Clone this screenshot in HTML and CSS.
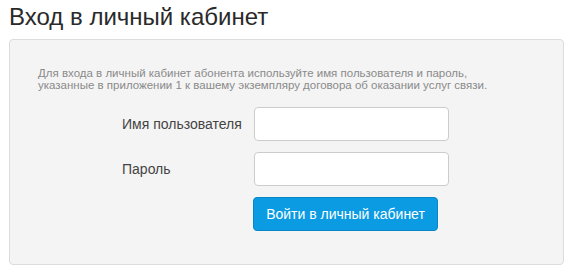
FILE: index.html
```html
<!DOCTYPE html>
<html lang="ru">
<head>
<meta charset="utf-8">
<link rel="stylesheet" href="styles.css">
</head>
<body>
<h1 class="title">Вход в личный кабинет</h1>
<div class="panel">
  <p class="hint">Для входа в личный кабинет абонента используйте имя пользователя и пароль,<br>указанные в приложении 1 к вашему экземпляру договора об оказании услуг связи.</p>
  <form class="form">
    <label class="label" for="u">Имя пользователя</label>
    <input class="input" id="u" type="text">
    <label class="label" for="p">Пароль</label>
    <input class="input" id="p" type="password">
    <span></span>
    <button class="btn" type="button">Войти в личный кабинет</button>
  </form>
</div>
</body>
</html>
```

FILE: styles.css
```css
html, body {
  margin: 0;
  padding: 0;
  background: #fff;
  font-family: "Liberation Sans", Arial, sans-serif;
}
body {
  padding: 0 12px 0 9px;
}
.title {
  margin: 0;
  padding-top: 3px;
  height: 36px;
  font-size: 24px;
  font-weight: normal;
  color: #2a2a2a;
  line-height: 27px;
}
.panel {
  box-sizing: border-box;
  width: 555px;
  height: 226px;
  background: #f4f4f4;
  border: 1px solid #dcdcdc;
  border-radius: 4px;
  padding: 27px 28px 0 28px;
}
.hint {
  margin: 0;
  font-size: 11.5px;
  line-height: 12px;
  color: #8a8a8a;
}
.form {
  margin: 16px 0 0 84px;
  display: grid;
  grid-template-columns: 121px 195px;
  column-gap: 11px;
  row-gap: 11px;
  align-items: center;
}
.label {
  text-align: left;
  font-size: 14px;
  white-space: nowrap;
  color: #444;
}
.input {
  box-sizing: border-box;
  height: 34px;
  border: 1px solid #ccc;
  border-radius: 4px;
  background: #fff;
  margin: 0;
}
.btn {
  box-sizing: border-box;
  justify-self: start;
  width: 185px;
  height: 34px;
  margin-left: -1px;
  border: 1px solid #0a86c8;
  border-radius: 4px;
  background: #0a9be3;
  color: #fff;
  font-family: inherit;
  font-size: 14px;
  cursor: pointer;
}
```
